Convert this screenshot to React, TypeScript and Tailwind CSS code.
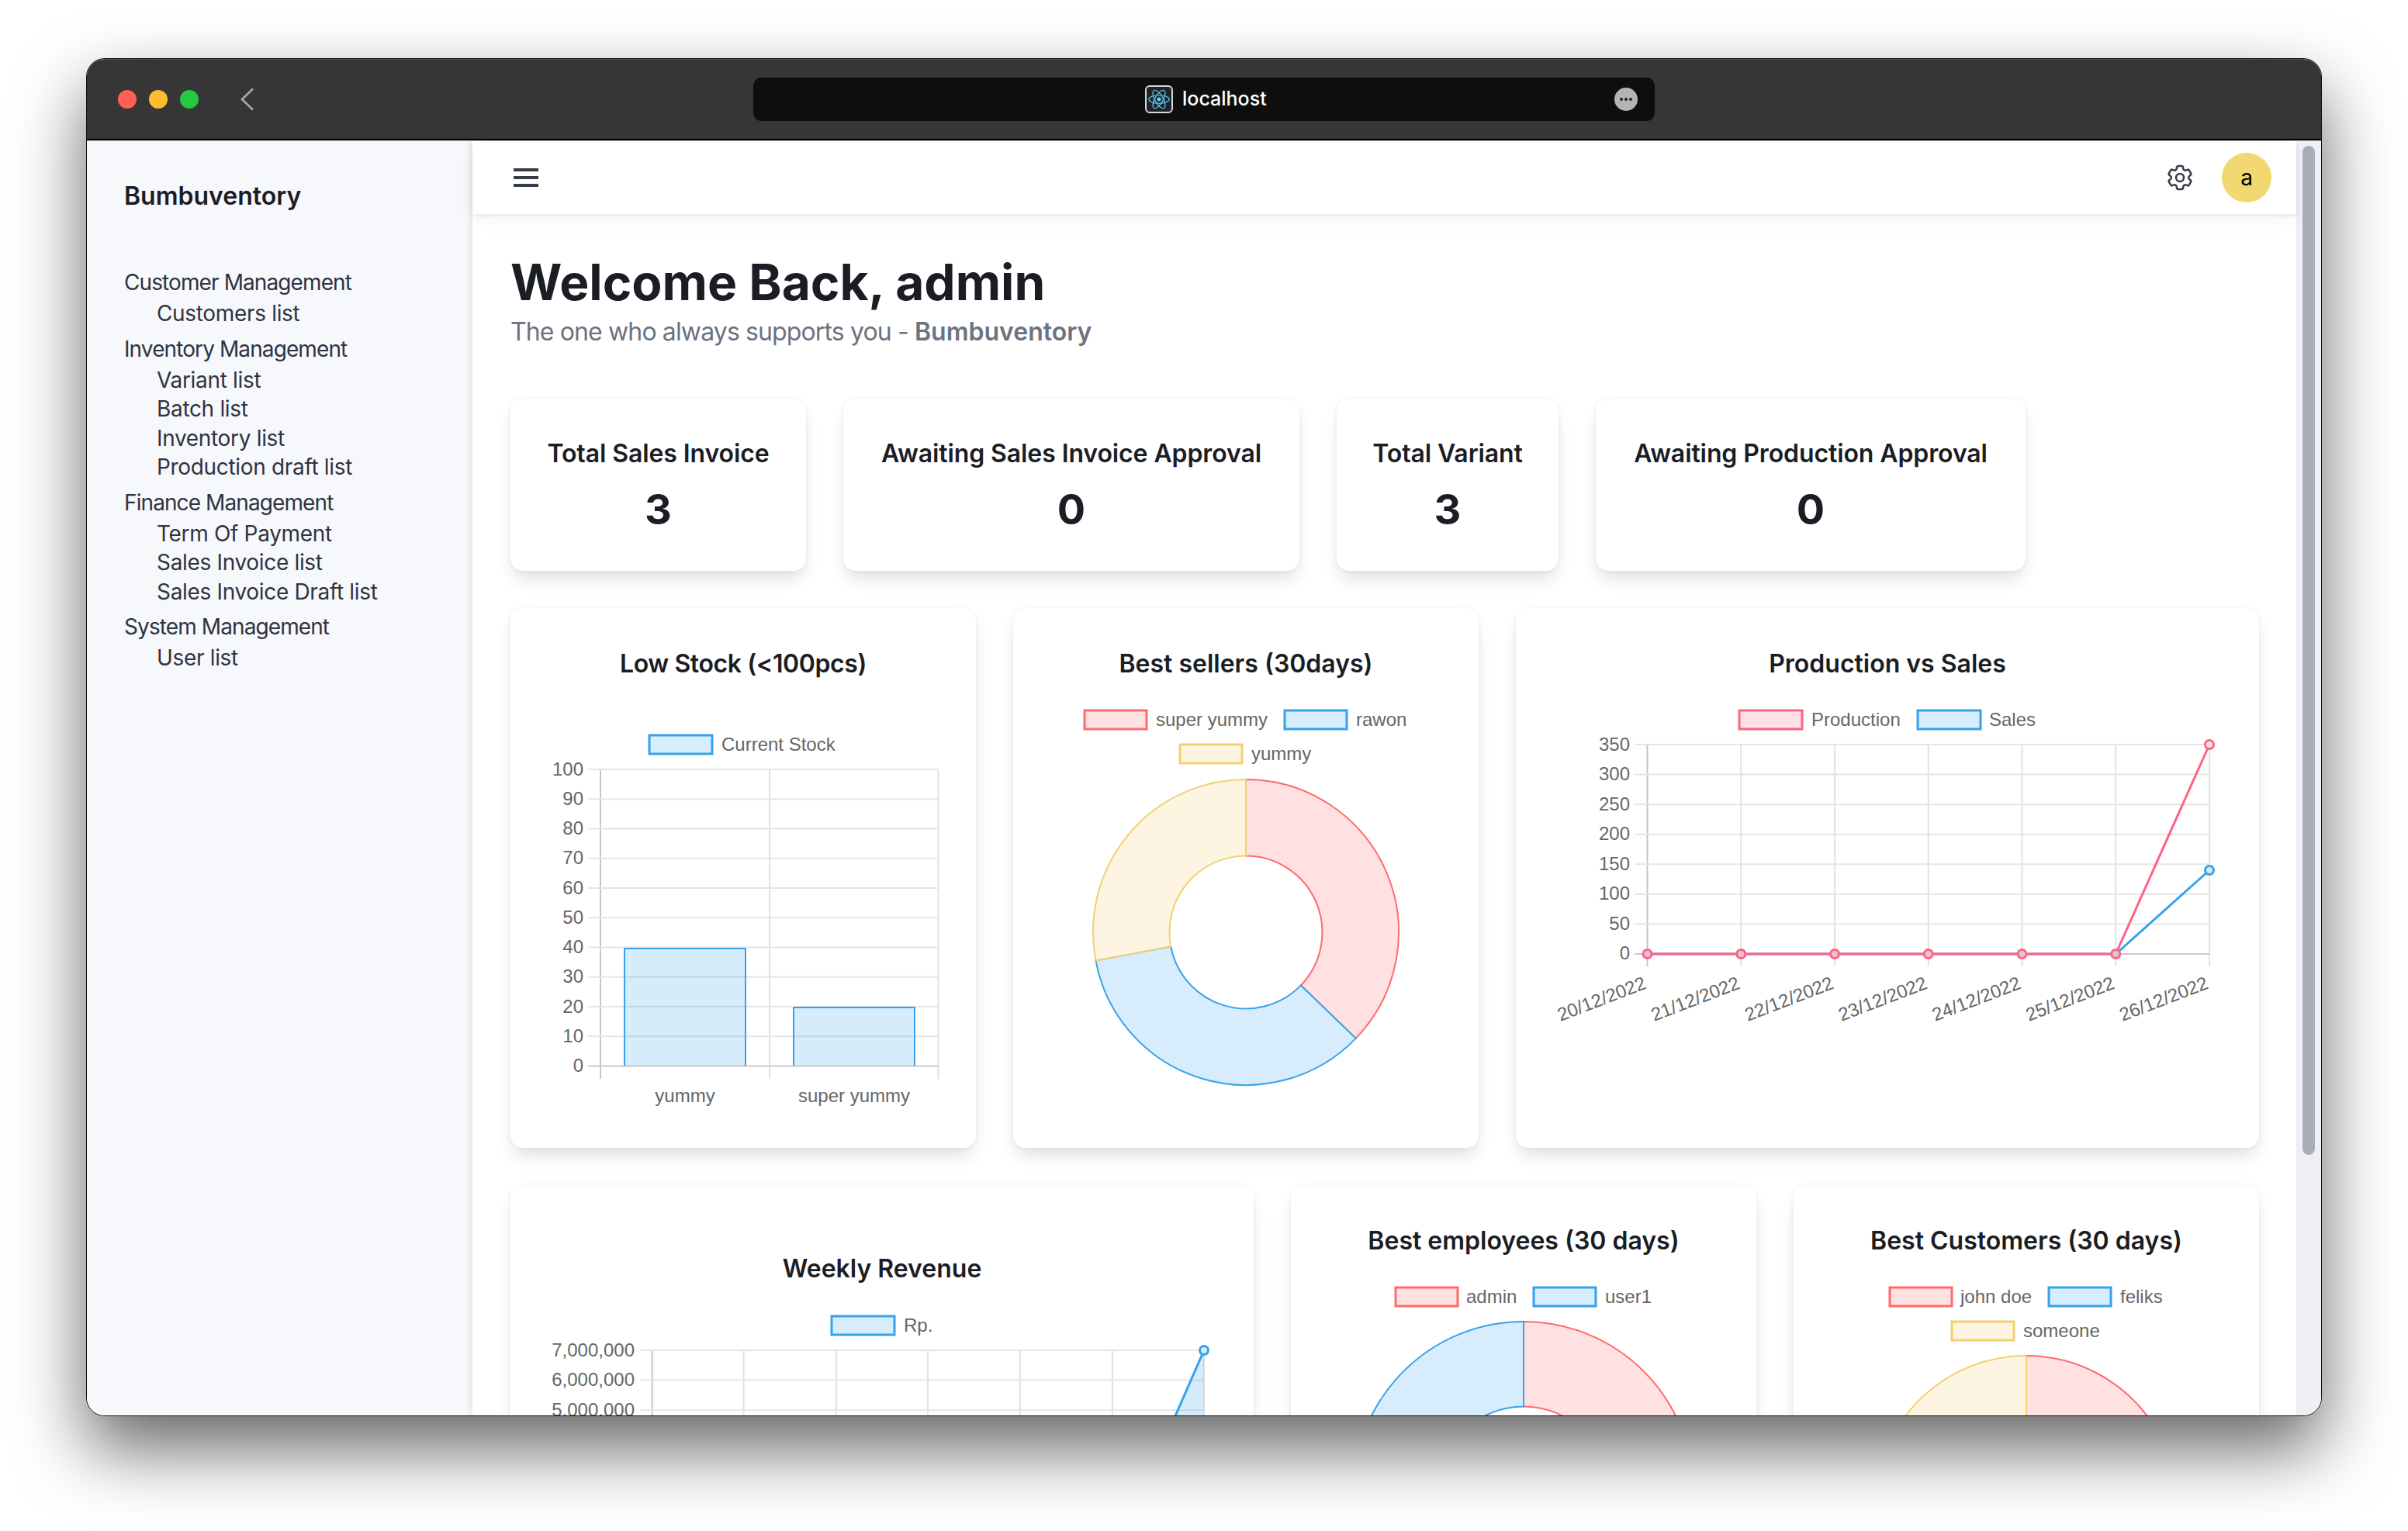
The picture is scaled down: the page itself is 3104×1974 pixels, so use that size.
import { HiOutlineCog6Tooth } from "react-icons/hi2";
import type { ReactNode } from "react";

const BLUE = { stroke: "#36a2eb", fill: "#d7ecfc" };
const RED = { stroke: "#ff6b6b", fill: "#ffe1e2" };
const YELLOW = { stroke: "#f3d06f", fill: "#fdf5e2" };
const PINK = { stroke: "#ff6384", fill: "#ffe0e6" };

type Tone = typeof BLUE;

const menu = [
  { label: "Customer Management", items: ["Customers list"] },
  { label: "Inventory Management", items: ["Variant list", "Batch list", "Inventory list", "Production draft list"] },
  { label: "Finance Management", items: ["Term Of Payment", "Sales Invoice list", "Sales Invoice Draft list"] },
  { label: "System Management", items: ["User list"] },
];

const stats = [
  { label: "Total Sales Invoice", value: 3, width: "w-[381px]" },
  { label: "Awaiting Sales Invoice Approval", value: 0, width: "w-[588px]" },
  { label: "Total Variant", value: 3, width: "w-[286px]" },
  { label: "Awaiting Production Approval", value: 0, width: "w-[554px]" },
];

function arc(cx: number, cy: number, R: number, r: number, from: number, to: number) {
  const p = (rad: number, deg: number) => {
    const a = ((deg - 90) * Math.PI) / 180;
    return `${cx + rad * Math.cos(a)} ${cy + rad * Math.sin(a)}`;
  };
  const large = to - from > 180 ? 1 : 0;
  return `M${p(R, from)} A${R} ${R} 0 ${large} 1 ${p(R, to)} L${p(r, to)} A${r} ${r} 0 ${large} 0 ${p(r, from)} Z`;
}

function Donut({ cx, cy, R, parts }: { cx: number; cy: number; R: number; parts: { to: number; tone: Tone }[] }) {
  let from = 0;
  return (
    <>
      {parts.map((part) => {
        const d = arc(cx, cy, R, R / 2, from, part.to);
        from = part.to;
        return <path key={part.to} d={d} fill={part.tone.fill} stroke={part.tone.stroke} strokeWidth={2} />;
      })}
    </>
  );
}

function Legend({ x, y, label, tone, w = 80, textX }: { x: number; y: number; label: string; tone: Tone; w?: number; textX: number }) {
  return (
    <>
      <rect x={x} y={y - 12} width={w} height={24} fill={tone.fill} stroke={tone.stroke} strokeWidth={3} />
      <text x={textX} y={y - 1} dominantBaseline="central" fontSize={24} fill="#666">
        {label}
      </text>
    </>
  );
}

function Grid({ xs, ys, tickLeft, tickBottom, labels, labelX }: { xs: number[]; ys: number[]; tickLeft: number; tickBottom: number; labels: string[]; labelX: number }) {
  const right = xs[xs.length - 1];
  return (
    <>
      {xs.map((x, i) => (
        <line key={x} x1={x} x2={x} y1={ys[0]} y2={tickBottom} stroke={i === 0 ? "#c6c6c6" : "#e2e2e2"} strokeWidth={2} />
      ))}
      {ys.map((y, i) => (
        <line key={y} x1={tickLeft} x2={right} y1={y} y2={y} stroke={i === ys.length - 1 ? "#c9c9c9" : "#e5e5e5"} strokeWidth={2} />
      ))}
      {labels.map((label, i) => (
        <text key={label} x={labelX} y={ys[i] - 1} textAnchor="end" dominantBaseline="central" fontSize={24} fill="#666">
          {label}
        </text>
      ))}
    </>
  );
}

function ChartCard({ title, x, top, width, height, className, titleClass, children }: { title: string; x: number; top: number; width: number; height: number; className: string; titleClass: string; children: ReactNode }) {
  return (
    <div className={`h-[696px] shrink-0 overflow-hidden rounded-2xl bg-white shadow-[0_0_6px_rgba(0,0,0,0.06),0_14px_22px_-4px_rgba(0,0,0,0.12)] ${className}`}>
      <h2 className={`text-center text-[32px] leading-[48px] font-semibold text-[#1b1d24] ${titleClass}`}>{title}</h2>
      <svg width={width} height={height} viewBox={`${x} ${top} ${width} ${height}`} className="block font-['Liberation_Sans',sans-serif]">
        {children}
      </svg>
    </div>
  );
}

function range(start: number, step: number, count: number) {
  return Array.from({ length: count }, (_, i) => start + step * i);
}

function LowStockChart() {
  const ys = range(992, 38.25, 11);
  const bars = [
    { x: 805, w: 156, y: 1223 },
    { x: 1023, w: 156, y: 1299 },
  ];
  return (
    <ChartCard title="Low Stock (<100pcs)" x={658} top={880} width={600} height={600} className="w-[600px]" titleClass="pt-12 tracking-[-0.4px]">
      <Legend x={837} y={960} w={81} label="Current Stock" tone={BLUE} textX={930} />
      <Grid xs={[774, 992, 1209.5]} ys={ys} tickLeft={758} tickBottom={1391} labelX={752} labels={["100", "90", "80", "70", "60", "50", "40", "30", "20", "10", "0"]} />
      {bars.map((bar) => (
        <g key={bar.x}>
          <rect x={bar.x} y={bar.y} width={bar.w} height={1374 - bar.y} fill="#36a2eb" fillOpacity={0.2} />
          <path d={`M${bar.x} 1374 V${bar.y} H${bar.x + bar.w} V1374`} fill="none" stroke={BLUE.stroke} strokeWidth={2} />
        </g>
      ))}
      <text x={883} y={1412} textAnchor="middle" dominantBaseline="central" fontSize={24} fill="#666">yummy</text>
      <text x={1101} y={1412} textAnchor="middle" dominantBaseline="central" fontSize={24} fill="#666">super yummy</text>
    </ChartCard>
  );
}

function BestSellersChart() {
  return (
    <ChartCard title="Best sellers (30days)" x={1306} top={880} width={600} height={600} className="w-[600px]" titleClass="pt-12">
      <Legend x={1398} y={928} label="super yummy" tone={RED} textX={1490} />
      <Legend x={1656} y={928} label="rawon" tone={BLUE} textX={1748} />
      <Legend x={1521} y={972} label="yummy" tone={YELLOW} textX={1613} />
      <Donut cx={1606} cy={1202} R={197} parts={[{ to: 134, tone: RED }, { to: 259.3, tone: BLUE }, { to: 360, tone: YELLOW }]} />
    </ChartCard>
  );
}

function ProductionChart() {
  const xs = range(2123.5, 120.75, 7);
  const ys = range(960, 38.57, 8);
  const dates = ["20/12/2022", "21/12/2022", "22/12/2022", "23/12/2022", "24/12/2022", "25/12/2022", "26/12/2022"];
  const salesTop = 1122;
  return (
    <ChartCard title="Production vs Sales" x={1954} top={880} width={958} height={600} className="w-[958px]" titleClass="pt-12">
      <Legend x={2242} y={928} w={81} label="Production" tone={PINK} textX={2335} />
      <Legend x={2472} y={928} w={81} label="Sales" tone={BLUE} textX={2564} />
      <Grid xs={xs} ys={ys} tickLeft={2107.5} tickBottom={1246} labelX={2101} labels={["350", "300", "250", "200", "150", "100", "50", "0"]} />
      {dates.map((date, i) => (
        <text key={date} x={xs[i] - 3} y={1266} textAnchor="end" dominantBaseline="central" fontSize={24} fill="#666" transform={`rotate(-21 ${xs[i] - 3} 1266)`}>
          {date}
        </text>
      ))}
      <polyline points={`${xs[0]},1230 ${xs[5]},1230 ${xs[6]},${salesTop}`} fill="none" stroke={BLUE.stroke} strokeWidth={3} />
      <circle cx={xs[6]} cy={salesTop} r={5.5} fill="#e1e5ea" stroke={BLUE.stroke} strokeWidth={3} />
      <polyline points={`${xs[0]},1230 ${xs[5]},1230 ${xs[6]},960`} fill="none" stroke={PINK.stroke} strokeWidth={3} />
      {xs.map((x, i) => (
        <circle key={x} cx={x} cy={i === 6 ? 960 : 1230} r={5.5} fill={i === 6 ? "#ffe0e6" : "#dcc6d0"} stroke={PINK.stroke} strokeWidth={3} />
      ))}
    </ChartCard>
  );
}

function WeeklyRevenueChart() {
  const xs = [840.7, 958.6, 1078, 1196, 1315, 1434, 1552];
  const ys = range(1741, 38.57, 8);
  return (
    <ChartCard title="Weekly Revenue" x={658} top={1660} width={958} height={400} className="w-[958px]" titleClass="pt-[84px]">
      <Legend x={1072} y={1709} w={81} label="Rp." tone={BLUE} textX={1165} />
      <Grid xs={xs} ys={ys} tickLeft={825} tickBottom={2027} labelX={818} labels={["7,000,000", "6,000,000", "5,000,000"]} />
      <polygon points="1434,2011 1552,1741 1552,2011" fill="#36a2eb" fillOpacity={0.2} />
      <polyline points="1434,2011 1552,1741" fill="none" stroke={BLUE.stroke} strokeWidth={3} />
      <circle cx={1552} cy={1741} r={5.5} fill="#d7ecfc" stroke={BLUE.stroke} strokeWidth={3} />
    </ChartCard>
  );
}

function BestEmployeesChart() {
  return (
    <ChartCard title="Best employees (30 days)" x={1664} top={1624} width={600} height={600} className="w-[600px]" titleClass="pt-12">
      <Legend x={1799} y={1672} label="admin" tone={RED} textX={1890} />
      <Legend x={1977} y={1672} label="user1" tone={BLUE} textX={2069} />
      <Donut cx={1964} cy={1923} R={219} parts={[{ to: 180, tone: RED }, { to: 360, tone: BLUE }]} />
    </ChartCard>
  );
}

function BestCustomersChart() {
  return (
    <ChartCard title="Best Customers (30 days)" x={2312} top={1624} width={600} height={600} className="w-[600px]" titleClass="pt-12">
      <Legend x={2436} y={1672} label="john doe" tone={RED} textX={2527} />
      <Legend x={2641} y={1672} label="feliks" tone={BLUE} textX={2733} />
      <Legend x={2516} y={1716} label="someone" tone={YELLOW} textX={2608} />
      <Donut cx={2612} cy={1943} R={195} parts={[{ to: 120, tone: RED }, { to: 240, tone: BLUE }, { to: 360, tone: YELLOW }]} />
    </ChartCard>
  );
}

function TitleBar() {
  return (
    <div className="flex h-[105px] shrink-0 items-center border-b-2 border-black bg-[#363636] shadow-[inset_0_1px_0_rgba(255,255,255,0.12)]">
      <div className="ml-[40px] flex gap-4">
        <span className="h-6 w-6 rounded-full bg-[#ff5f57]" />
        <span className="h-6 w-6 rounded-full bg-[#febc2e]" />
        <span className="h-6 w-6 rounded-full bg-[#28c840]" />
      </div>
      <svg width="20" height="30" viewBox="0 0 20 30" fill="none" className="ml-[53px]">
        <path d="M17 1.5 3 15l14 13.5" stroke="#a8a8a8" strokeWidth="2.6" />
      </svg>
      <div className="ml-[642px] flex h-14 w-[1162px] items-center rounded-[10px] bg-[#0e0e0e]">
        <div className="ml-[505px] flex h-9 w-9 items-center justify-center rounded-md border-2 border-[#d8d8d8] bg-[#20232a]">
          <svg width="30" height="30" viewBox="-12 -12 24 24" fill="none" stroke="#61dafb" strokeWidth="0.9">
            <ellipse rx="10.5" ry="4.2" />
            <ellipse rx="10.5" ry="4.2" transform="rotate(60)" />
            <ellipse rx="10.5" ry="4.2" transform="rotate(120)" />
            <circle r="2" fill="#61dafb" stroke="none" />
          </svg>
        </div>
        <span className="ml-3 text-[25px] font-medium text-white">localhost</span>
        <div className="ml-auto mr-[22px] flex h-[30px] w-[30px] items-center justify-center gap-[2px] rounded-full bg-[#b4b4b4]">
          <span className="h-1 w-1 rounded-full bg-[#222]" />
          <span className="h-1 w-1 rounded-full bg-[#222]" />
          <span className="h-1 w-1 rounded-full bg-[#222]" />
        </div>
      </div>
    </div>
  );
}

function Sidebar() {
  return (
    <aside className="w-[497px] shrink-0 bg-[#f7f8fc] pl-12 text-[#2f3341]">
      <div className="pt-[53px] text-[32px] leading-9 font-semibold text-[#1b1d24]">Bumbuventory</div>
      <nav className="mt-[73px] flex flex-col gap-[6px] text-[28px]">
        {menu.map((group) => (
          <div key={group.label}>
            <div className="leading-10 tracking-[-0.9px]">{group.label}</div>
            <ul className="mt-[2px] pl-[42px] tracking-[-0.33px]">
              {group.items.map((item) => (
                <li key={item} className="leading-[37.5px]">{item}</li>
              ))}
            </ul>
          </div>
        ))}
      </nav>
    </aside>
  );
}

function Header() {
  return (
    <header className="relative z-10 flex h-[94px] shrink-0 items-center bg-white pl-[53px] pr-8 shadow-[0_2px_6px_rgba(0,0,0,0.08),0_10px_24px_rgba(0,0,0,0.04)]">
      <svg width="32" height="24" viewBox="0 0 32 24" fill="#373b4a">
        <rect width="32" height="4" />
        <rect y="10" width="32" height="4" />
        <rect y="20" width="32" height="4" />
      </svg>
      <HiOutlineCog6Tooth className="ml-auto text-[#373b4a]" size={40} />
      <div className="ml-[34px] flex h-16 w-16 items-center justify-center rounded-full bg-[#f2d871] text-[28px] text-black">a</div>
    </header>
  );
}

function Dashboard() {
  return (
    <div className="flex-1 overflow-hidden pl-[49px] pr-12 pt-[52px]">
      <h1 className="text-[64px] leading-[72px] font-bold text-[#1b1d24]">Welcome Back, admin</h1>
      <p className="mt-2 text-[32px] leading-10 text-[#6b7280]">
        <span className="tracking-[-0.87px]">The one who always supports you - </span>
        <span className="font-semibold">Bumbuventory</span>
      </p>
      <div className="mt-[66px] flex gap-12">
        {stats.map((stat) => (
          <div key={stat.label} className={`h-[222px] rounded-2xl bg-white pt-[47px] text-center text-[#1b1d24] shadow-[0_0_6px_rgba(0,0,0,0.06),0_14px_22px_-4px_rgba(0,0,0,0.12)] ${stat.width}`}>
            <div className="text-[32px] leading-12 font-semibold tracking-[-0.1px]">{stat.label}</div>
            <div className="mt-3 text-[54px] leading-[72px] font-bold">{stat.value}</div>
          </div>
        ))}
      </div>
      <div className="mt-12 flex gap-12">
        <LowStockChart />
        <BestSellersChart />
        <ProductionChart />
      </div>
      <div className="mt-12 flex gap-12">
        <WeeklyRevenueChart />
        <BestEmployeesChart />
        <BestCustomersChart />
      </div>
    </div>
  );
}

export default function App() {
  return (
    <div className="h-[1974px] w-[3104px] overflow-hidden bg-white pl-[111px] pt-[75px] font-['Inter',sans-serif]">
      <div className="flex h-[1751px] w-[2882px] flex-col overflow-hidden rounded-[24px] border border-[#111] bg-white shadow-[0_42px_90px_rgba(0,0,0,0.6)]">
        <TitleBar />
        <div className="flex min-h-0 flex-1 border-t border-[#c8c8c8]">
          <Sidebar />
          <main className="relative flex min-w-0 flex-1 flex-col shadow-[-3px_0_8px_rgba(0,0,0,0.08)]">
            <Header />
            <Dashboard />
          </main>
          <div className="w-8 shrink-0 bg-[#eff0f5] pl-2 pt-[6px]">
            <div className="h-[1301px] w-4 rounded-full bg-[#a9adb5]" />
          </div>
        </div>
      </div>
    </div>
  );
}
